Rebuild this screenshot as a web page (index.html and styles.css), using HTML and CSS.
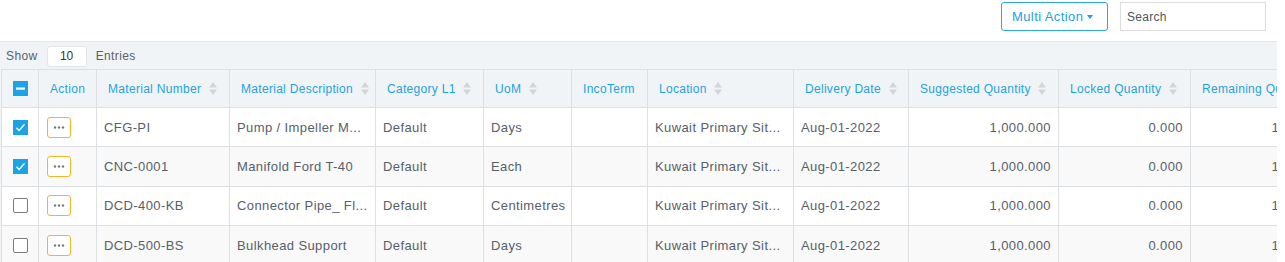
FILE: index.html
```html
<!DOCTYPE html>
<html lang="en">
<head>
    <meta charset="UTF-8">
    <meta name="viewport" content="width=device-width, initial-scale=1.0">
    <title>Material Planning</title>
    <link rel="stylesheet" href="styles.css">
</head>
<body>
    <div class="page">
        <div class="topbar">
            <button class="multi-btn">Multi Action <span class="caret"></span></button>
            <input class="search" type="text" placeholder="Search">
        </div>

        <div class="content">
            <div class="entries">
                <span>Show</span>
                <input class="entries-input" type="text" value="10">
                <span>Entries</span>
            </div>

            <div class="table-wrap">
                <table class="grid">
                    <colgroup>
                        <col style="width:37px">
                        <col style="width:58px">
                        <col style="width:133px">
                        <col style="width:146px">
                        <col style="width:108px">
                        <col style="width:88px">
                        <col style="width:76px">
                        <col style="width:146px">
                        <col style="width:115px">
                        <col style="width:150px">
                        <col style="width:132px">
                        <col style="width:150px">
                    </colgroup>
                    <thead>
                        <tr>
                            <th class="chk-cell"><span class="chk partial"></span></th>
                            <th>Action</th>
                            <th>Material Number <span class="sort"></span></th>
                            <th>Material Description <span class="sort"></span></th>
                            <th>Category L1 <span class="sort"></span></th>
                            <th>UoM <span class="sort"></span></th>
                            <th>IncoTerm</th>
                            <th>Location <span class="sort"></span></th>
                            <th>Delivery Date <span class="sort"></span></th>
                            <th>Suggested Quantity <span class="sort"></span></th>
                            <th>Locked Quantity <span class="sort"></span></th>
                            <th>Remaining Quantity <span class="sort"></span></th>
                        </tr>
                    </thead>
                    <tbody>
                        <tr>
                            <td class="chk-cell"><span class="chk checked"></span></td>
                            <td><span class="act-btn"></span></td>
                            <td>CFG-PI</td>
                            <td>Pump / Impeller M...</td>
                            <td>Default</td>
                            <td>Days</td>
                            <td></td>
                            <td>Kuwait Primary Sit...</td>
                            <td>Aug-01-2022</td>
                            <td class="num">1,000.000</td>
                            <td class="num">0.000</td>
                            <td class="num">1,000.000</td>
                        </tr>
                        <tr>
                            <td class="chk-cell"><span class="chk checked"></span></td>
                            <td><span class="act-btn"></span></td>
                            <td>CNC-0001</td>
                            <td>Manifold Ford T-40</td>
                            <td>Default</td>
                            <td>Each</td>
                            <td></td>
                            <td>Kuwait Primary Sit...</td>
                            <td>Aug-01-2022</td>
                            <td class="num">1,000.000</td>
                            <td class="num">0.000</td>
                            <td class="num">1,000.000</td>
                        </tr>
                        <tr>
                            <td class="chk-cell"><span class="chk"></span></td>
                            <td><span class="act-btn"></span></td>
                            <td>DCD-400-KB</td>
                            <td>Connector Pipe_ Fl...</td>
                            <td>Default</td>
                            <td>Centimetres</td>
                            <td></td>
                            <td>Kuwait Primary Sit...</td>
                            <td>Aug-01-2022</td>
                            <td class="num">1,000.000</td>
                            <td class="num">0.000</td>
                            <td class="num">1,000.000</td>
                        </tr>
                        <tr>
                            <td class="chk-cell"><span class="chk"></span></td>
                            <td><span class="act-btn"></span></td>
                            <td>DCD-500-BS</td>
                            <td>Bulkhead Support</td>
                            <td>Default</td>
                            <td>Days</td>
                            <td></td>
                            <td>Kuwait Primary Sit...</td>
                            <td>Aug-01-2022</td>
                            <td class="num">1,000.000</td>
                            <td class="num">0.000</td>
                            <td class="num">1,000.000</td>
                        </tr>
                    </tbody>
                </table>
            </div>
        </div>
    </div>
</body>
</html>
```

FILE: styles.css
```css
body {
    margin: 0;
    background: #fff;
    font-family: "Liberation Sans", Arial, sans-serif;
    color: #56606a;
}
.page {
    width: 1277px;
}
.topbar {
    height: 42px;
    display: flex;
    justify-content: flex-end;
    align-items: flex-start;
    gap: 12px;
    padding: 2px 11px 0 0;
    box-sizing: border-box;
    background: #fff;
    border-bottom: 1px solid #e4e7eb;
}
.multi-btn {
    height: 29px;
    padding: 0 10px;
    background: #fff;
    border: 1px solid #2aa9e0;
    border-radius: 3px;
    color: #1d9fdb;
    font-family: inherit;
    font-size: 13px;
    letter-spacing: 0.4px;
    display: flex;
    align-items: center;
    gap: 4px;
    width: 107px;
}
.caret {
    width: 0;
    height: 0;
    border-left: 3.5px solid transparent;
    border-right: 3.5px solid transparent;
    border-top: 4px solid #1d9fdb;
}
.search {
    width: 146px;
    height: 29px;
    box-sizing: border-box;
    border: 1px solid #dcdcdc;
    padding: 0 6px;
    font-family: inherit;
    font-size: 12px;
    letter-spacing: 0.3px;
}
.search::placeholder {
    color: #555;
}
.content {
    background: #f1f4f7;
}
.entries {
    display: flex;
    align-items: center;
    gap: 9px;
    height: 24px;
    padding: 2px 0 0 6px;
    margin-bottom: 1px;
    font-size: 12px;
    letter-spacing: 0.4px;
    color: #5a6169;
}
.entries-input {
    width: 40px;
    height: 21px;
    box-sizing: border-box;
    border: 1px solid #e2e5e9;
    border-radius: 3px;
    text-align: center;
    font-family: inherit;
    font-size: 12px;
    color: #333;
    padding: 0;
}
.table-wrap {
    overflow: hidden;
    margin-left: 1px;
    width: 1276px;
}
.grid {
    border-collapse: collapse;
    table-layout: fixed;
    width: 1339px;
    font-size: 13px;
    letter-spacing: 0.4px;
}
.grid th {
    height: 36px;
    padding: 1px 0 0 11px;
    text-align: left;
    font-weight: normal;
    font-size: 12px;
    letter-spacing: 0.3px;
    color: #1ea3dc;
    background: #f1f4f7;
    border: 1px solid #dcdfe3;
    white-space: nowrap;
    overflow: hidden;
}
.grid td {
    height: 38.4px;
    padding: 0 7px;
    border: 1px solid #dcdfe3;
    white-space: nowrap;
    overflow: hidden;
    background: #fff;
}
.grid tbody tr:nth-child(even) td {
    background: #f9f9f9;
}
.grid td.num {
    text-align: right;
}
.grid .chk-cell {
    padding: 0 0 0 11px;
}
.sort {
    display: inline-block;
    vertical-align: middle;
    width: 8px;
    height: 13px;
    margin-left: 4px;
    margin-top: -2px;
    background: url("data:image/svg+xml,%3Csvg xmlns='http://www.w3.org/2000/svg' width='8' height='13'%3E%3Cpath d='M0 5.5L4 0l4 5.5z M0 7.5L4 13l4-5.5z' fill='%23d2d5d9'/%3E%3C/svg%3E") no-repeat;
}
.chk {
    display: block;
    width: 15px;
    height: 15px;
    box-sizing: border-box;
    border: 1px solid #7a7a7a;
    border-radius: 2px;
    background: #fff;
}
.chk.checked {
    border: none;
    border-radius: 0;
    background: #1ba3e3 url("data:image/svg+xml,%3Csvg xmlns='http://www.w3.org/2000/svg' width='15' height='15'%3E%3Cpath d='M3.5 7.8l2.6 2.6 5.4-6' fill='none' stroke='%23fff' stroke-width='1.4'/%3E%3C/svg%3E") no-repeat;
}
.chk.partial {
    border: none;
    border-radius: 0;
    background: #1ba3e3 url("data:image/svg+xml,%3Csvg xmlns='http://www.w3.org/2000/svg' width='15' height='15'%3E%3Crect x='3' y='6.5' width='9' height='2.2' fill='%23fff'/%3E%3C/svg%3E") no-repeat;
}
.act-btn {
    display: block;
    width: 24px;
    height: 21px;
    margin-left: 1px;
    box-sizing: border-box;
    border: 1px solid #f5b623;
    border-radius: 3px;
    background: #fff url("data:image/svg+xml,%3Csvg xmlns='http://www.w3.org/2000/svg' width='22' height='19'%3E%3Cg fill='%23737b84'%3E%3Ccircle cx='7' cy='9.5' r='1.2'/%3E%3Ccircle cx='11' cy='9.5' r='1.2'/%3E%3Ccircle cx='15' cy='9.5' r='1.2'/%3E%3C/g%3E%3C/svg%3E") no-repeat;
}
```
